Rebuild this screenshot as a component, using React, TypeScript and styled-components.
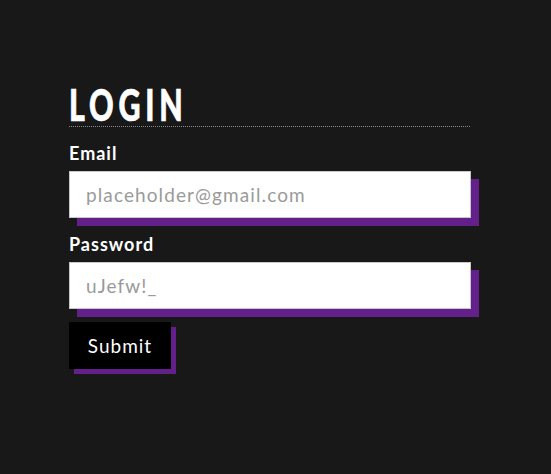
import React from "react";
import styled, { createGlobalStyle } from "styled-components";

const Global = createGlobalStyle`
  html, body { margin: 0; padding: 0; background: #181818; }
  body { font-family: "Lato", "Noto Sans", sans-serif; }
`;

const Page = styled.div`
  width: 551px;
  height: 474px;
  background: #181818;
  padding: 82px 0 0 69px;
  box-sizing: border-box;
`;

const Form = styled.form`
  display: flex;
  flex-direction: column;
  width: 402px;
`;

const Title = styled.h1`
  margin: 0;
  font-family: "Lato", "Noto Sans", sans-serif;
  font-weight: 900;
  font-size: 44px;
  line-height: 44px;
  color: #ffffff;
  border-bottom: 1px dotted #8a8a8a;
  width: 401px;
  white-space: nowrap;
`;

const TitleText = styled.span`
  display: inline-block;
  letter-spacing: 7px;
  -webkit-text-stroke: 0.7px #ffffff;
  transform: scaleX(0.69);
  transform-origin: left center;
`;

const Label = styled.label<{ $top: number }>`
  display: block;
  margin-top: ${(p) => p.$top}px;
  font-family: "Lato", "Noto Sans", sans-serif;
  font-weight: 700;
  font-size: 18px;
  line-height: 20px;
  letter-spacing: 1px;
  color: #ffffff;
`;

const Field = styled.div`
  margin-top: 8px;
  width: 402px;
  height: 47px;
`;

const Input = styled.input`
  box-sizing: border-box;
  width: 402px;
  height: 47px;
  border: 1px solid #c8c8c8;
  background: #ffffff;
  padding: 0 16px;
  font-family: "Lato", "Noto Sans", sans-serif;
  font-size: 19px;
  letter-spacing: 1.1px;
  color: #333;
  box-shadow: 8px 8px 0 #63208b;
  outline: none;
  &::placeholder { color: #9a9a9a; }
`;

const Button = styled.button`
  margin-top: 13px;
  align-self: flex-start;
  width: 102px;
  height: 47px;
  border: none;
  background: #000000;
  color: #ffffff;
  font-family: "Lato", "Noto Sans", sans-serif;
  font-size: 19px;
  letter-spacing: 1px;
  box-shadow: 5px 5px 0 #63208b;
  cursor: pointer;
`;

export default function App() {
  return (
    <>
      <Global />
      <Page>
        <Form onSubmit={(e) => e.preventDefault()}>
          <Title>
            <TitleText>LOGIN</TitleText>
          </Title>
          <Label $top={16}>Email</Label>
          <Field>
            <Input type="email" placeholder="placeholder@gmail.com" />
          </Field>
          <Label $top={16}>Password</Label>
          <Field>
            <Input type="text" placeholder="uJefw!_" />
          </Field>
          <Button type="submit">Submit</Button>
        </Form>
      </Page>
    </>
  );
}
